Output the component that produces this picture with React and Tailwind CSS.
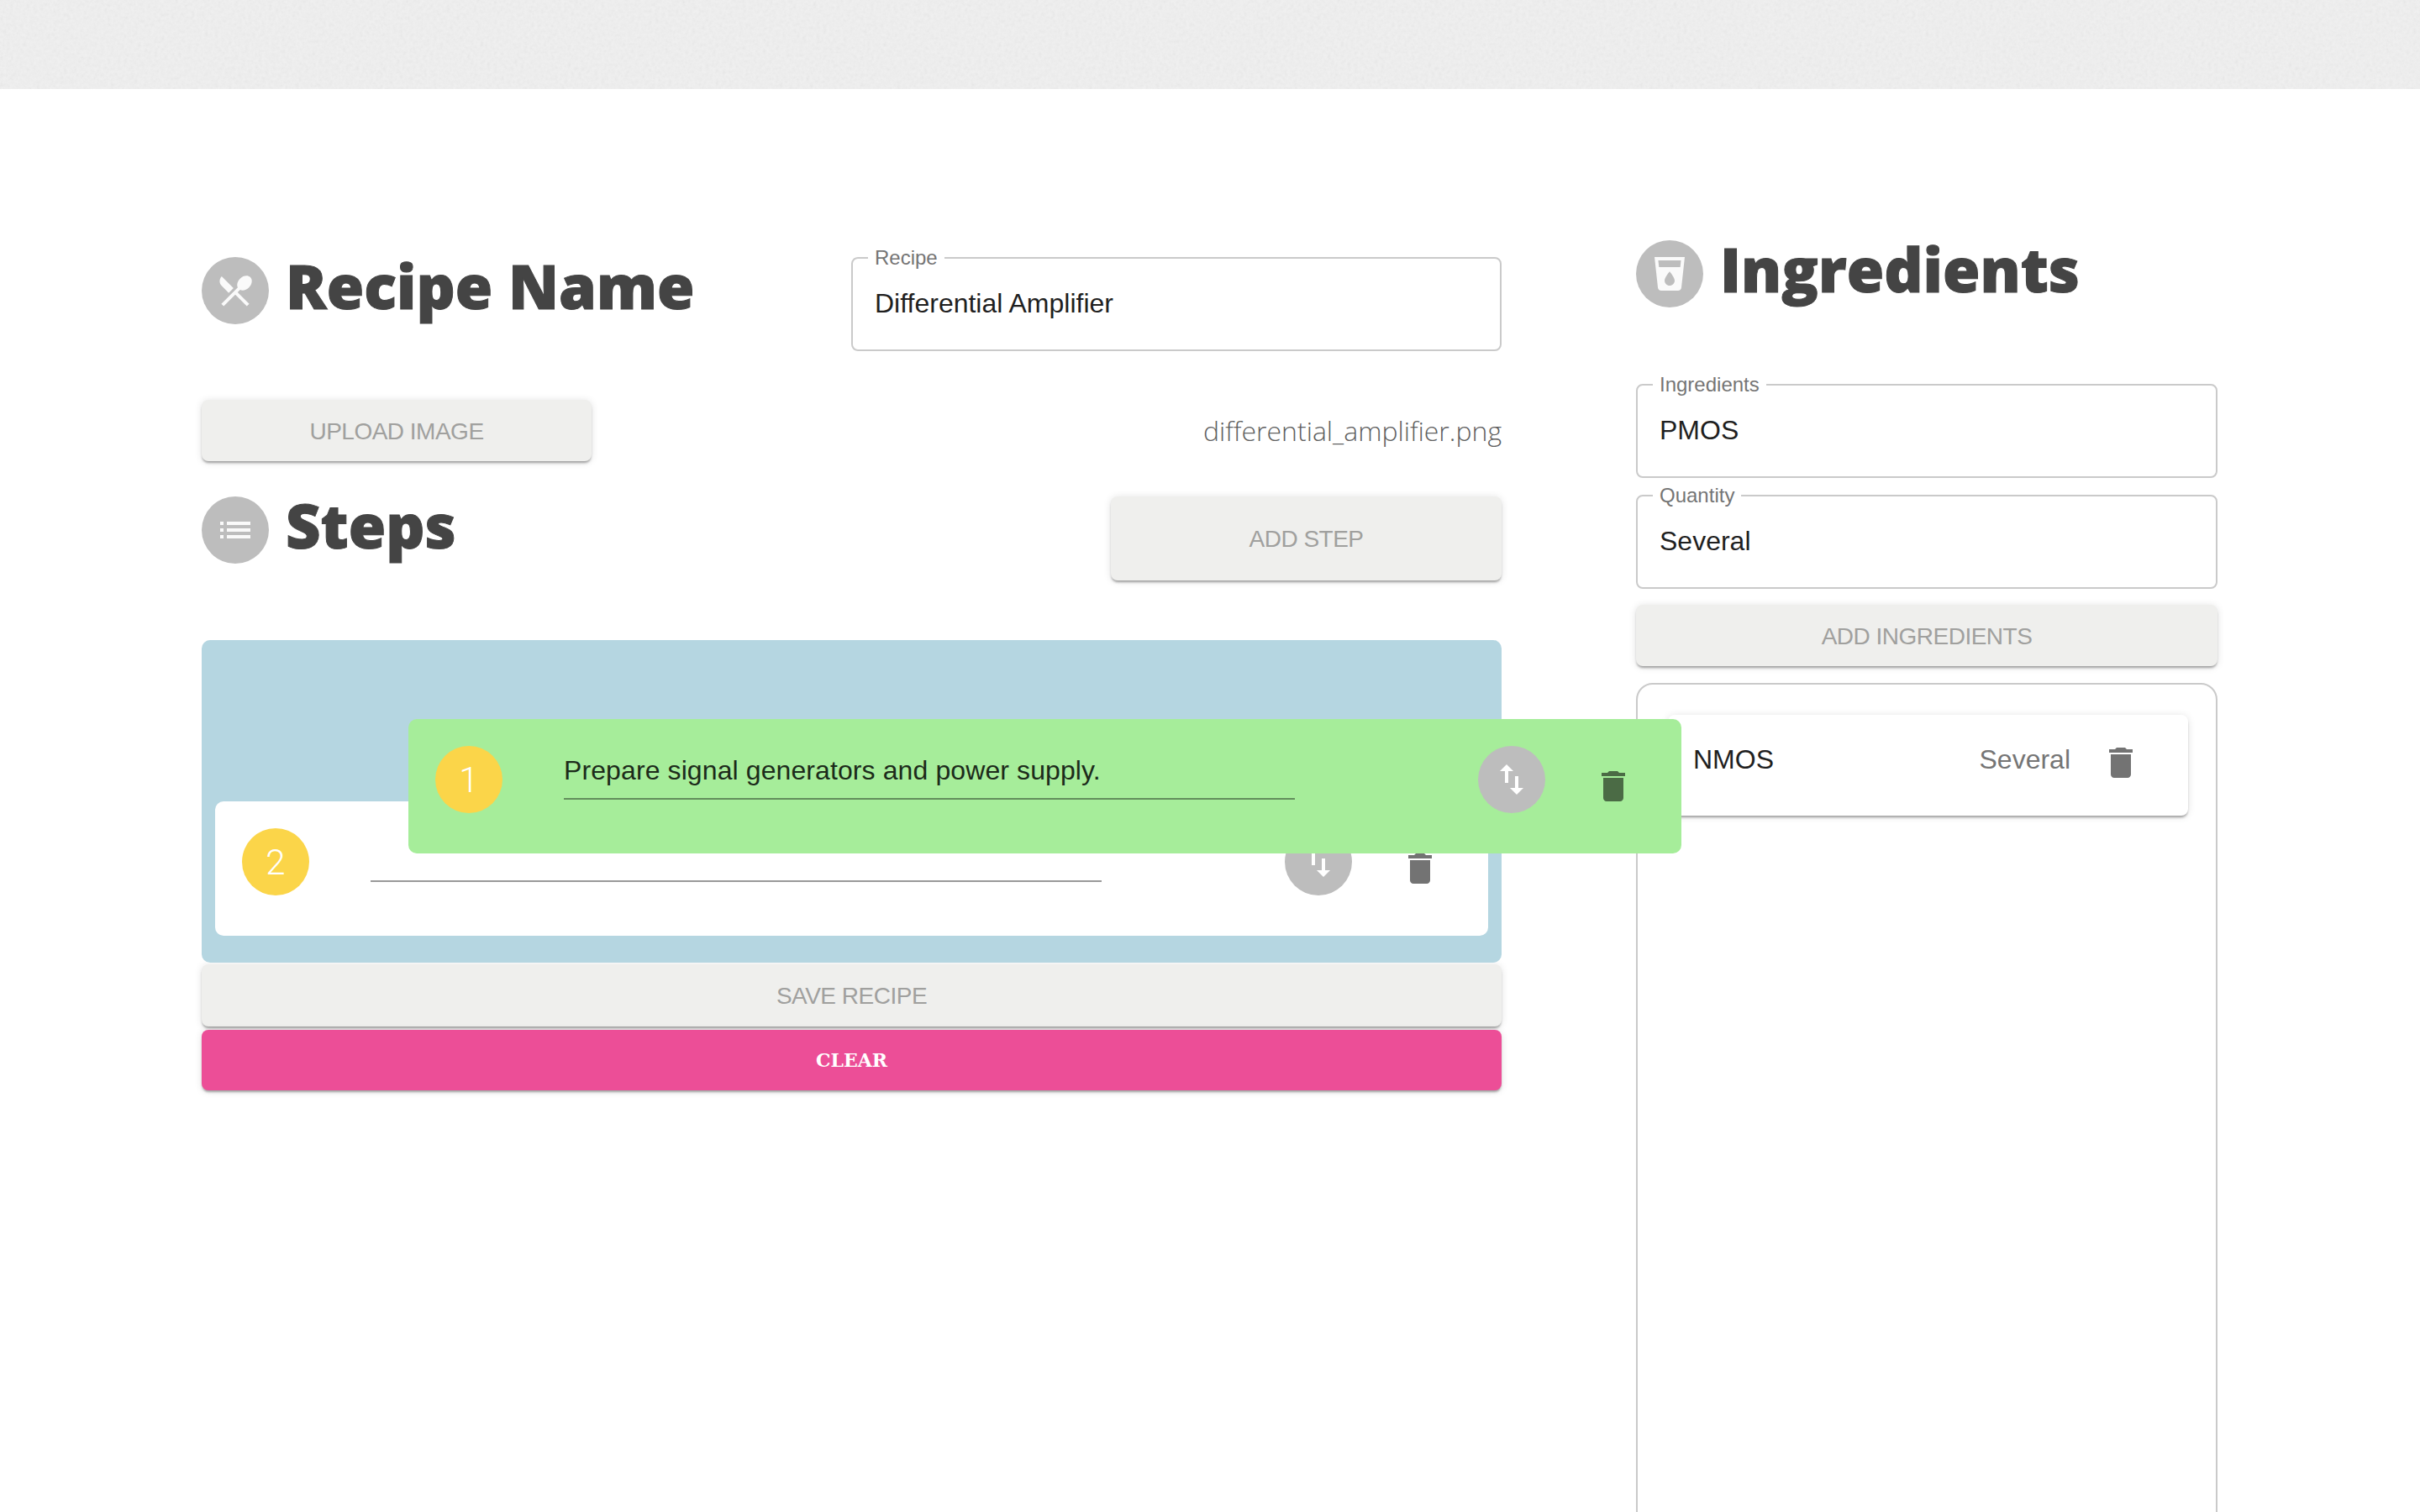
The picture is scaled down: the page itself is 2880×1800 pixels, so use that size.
import React from 'react';

const SWAP = 'M16 17.01V10h-2v7.01h-3L15 21l4-3.99h-3zM9 3L5 6.99h3V14h2V6.99h3L9 3z';
const TRASH = 'M6 19c0 1.1.9 2 2 2h8c1.1 0 2-.9 2-2V7H6v12zM19 4h-3.5l-1-1h-5l-1 1H5v2h14V4z';
const DINING = 'M8.1 13.34l2.83-2.83L3.91 3.5c-1.56 1.56-1.56 4.09 0 5.66l4.19 4.18zm6.78-1.81c1.53.71 3.68.21 5.27-1.38 1.91-1.91 2.28-4.65.81-6.12-1.46-1.46-4.2-1.1-6.12.81-1.59 1.59-2.09 3.74-1.38 5.27L3.7 19.87l1.41 1.41L12 14.41l6.88 6.88 1.41-1.41L13.41 13l1.47-1.47z';
const LIST = 'M3 13h2v-2H3v2zm0 4h2v-2H3v2zm0-8h2V7H3v2zm4 4h14v-2H7v2zm0 4h14v-2H7v2zM7 7v2h14V7H7z';
const DRINK = 'M3 2l2.01 18.23C5.13 21.23 5.97 22 7 22h10c1.03 0 1.87-.77 1.99-1.77L21 2H3zm9 17c-1.66 0-3-1.34-3-3 0-2 3-5.4 3-5.4s3 3.4 3 5.4c0 1.66-1.34 3-3 3zm6.33-11H5.67l-.44-4h13.53l-.43 4z';

function Icon({ d, className }) {
  return (
    <svg viewBox="0 0 24 24" className={`w-[48px] h-[48px] shrink-0 ${className}`} fill="currentColor">
      <path d={d} />
    </svg>
  );
}

function IconCircle({ d }) {
  return (
    <div className="w-[80px] h-[80px] rounded-full bg-[#bdbdbd] flex items-center justify-center shrink-0">
      <Icon d={d} className="text-[#fafafa]" />
    </div>
  );
}

function Heading({ icon, children }) {
  return (
    <div className="flex items-start gap-[20px] h-[80px]">
      <IconCircle d={icon} />
      <h1 className="-mt-[6px] font-['Open_Sans',sans-serif] font-extrabold text-[72px] leading-[80px] text-[#444444] [-webkit-text-stroke:1px_#444444]">{children}</h1>
    </div>
  );
}

// fieldset draws its top border through the middle of the legend, so the box starts above the line
function Field({ label, value, className = '' }) {
  return (
    <fieldset className={`h-[123px] border-2 border-[#cacaca] rounded-[8px] px-[26px] ${className}`}>
      <legend className="ml-[-8px] px-[8px] text-[24px] leading-[24px] text-[#757575]">{label}</legend>
      <div className="pt-[18px] text-[32px] leading-[48px] text-[#1f1f1f]">{value}</div>
    </fieldset>
  );
}

function Button({ children, className = '' }) {
  return (
    <div className={`bg-[#efefed] rounded-[8px] flex items-center justify-center pt-[2px] text-[28px] tracking-[-0.5px] text-[#a0a09e] shadow-[0_3px_3px_-1px_rgba(0,0,0,0.35),0_1px_10px_0_rgba(0,0,0,0.12)] ${className}`}>
      {children}
    </div>
  );
}

function StepRow({ num, text, className = '' }) {
  return (
    <div className={`w-[1515px] h-[160px] rounded-[10px] flex items-start pt-[32px] pl-[32px] ${className}`}>
      <div className="w-[80px] h-[80px] rounded-full bg-[#fbd549] flex items-center justify-center font-['Roboto',sans-serif] font-light text-[42px] text-white shrink-0">{num}</div>
      <div className="ml-[73px] w-[870px] h-[64px] border-b-2 border-black/40 pt-[5px] text-[32px] tracking-[0.1px] leading-[48px] text-[#1c2b1a]">{text}</div>
      <div className="ml-[218px] w-[80px] h-[80px] rounded-full bg-[#bdbdbd] flex items-center justify-center shrink-0">
        <Icon d={SWAP} className="text-white" />
      </div>
      <Icon d={TRASH} className="ml-[57px] mt-[24px] text-black/55" />
    </div>
  );
}

export default function App() {
  return (
    <div className="w-[2880px] h-[1800px] overflow-hidden bg-white font-['Liberation_Sans',sans-serif]">
      {/* Paper strip */}
      <div className="relative h-[106px] bg-[#f0f0f0] overflow-hidden">
        <svg className="absolute inset-0 w-full h-full opacity-[0.12]">
          <filter id="paper">
            <feTurbulence type="fractalNoise" baseFrequency="0.25" numOctaves="2" />
            <feColorMatrix type="saturate" values="0" />
          </filter>
          <rect width="100%" height="100%" filter="url(#paper)" />
        </svg>
      </div>

      <div className="flex pl-[240px] pt-[180px]">
        {/* Recipe column */}
        <div className="w-[1547px] pt-[20px]">
          <div className="flex items-start justify-between">
            <Heading icon={DINING}>Recipe Name</Heading>
            <Field label="Recipe" value="Differential Amplifier" className="w-[774px] -mt-[11px]" />
          </div>

          <div className="flex items-center justify-between mt-[58px]">
            <Button className="w-[464px] h-[73px]">UPLOAD IMAGE</Button>
            <span className="font-['Open_Sans',sans-serif] font-light text-[32px] text-[#5f5f5f]">differential_amplifier.png</span>
          </div>

          <div className="flex items-start justify-between mt-[42px]">
            <Heading icon={LIST}>Steps</Heading>
            <Button className="w-[465px] h-[100px]">ADD STEP</Button>
          </div>

          <div className="relative mt-[71px] h-[384px] bg-[#b5d6e1] rounded-[10px] pt-[192px] pl-[16px]">
            <StepRow num="2" className="bg-white" />
            {/* Step being dragged */}
            <StepRow
              num="1"
              text="Prepare signal generators and power supply."
              className="absolute left-[246px] top-[94px] bg-[#a6ed9a]"
            />
          </div>

          <Button className="w-full h-[74px] mt-[2px]">SAVE RECIPE</Button>
          <div className="w-full h-[72px] mt-[4px] bg-[#ec4e97] rounded-[8px] flex items-center justify-center font-['DejaVu_Serif',serif] font-bold text-[22px] text-white shadow-[0_3px_3px_-1px_rgba(0,0,0,0.35),0_1px_10px_0_rgba(0,0,0,0.12)]">
            CLEAR
          </div>
        </div>

        {/* Ingredients column */}
        <div className="ml-[160px] w-[692px]">
          <Heading icon={DRINK}>Ingredients</Heading>
          <Field label="Ingredients" value="PMOS" className="mt-[80px]" />
          <Field label="Quantity" value="Several" className="mt-[9px]" />
          <Button className="h-[73px] mt-[19px]">ADD INGREDIENTS</Button>
          <div className="h-[1100px] mt-[20px] border-2 border-[#cacaca] rounded-[20px] pt-[36px] pl-[36px] pr-[33px]">
            <div className="h-[120px] rounded-[8px] bg-white flex items-start pt-[33px] pl-[30px] pr-[56px] shadow-[0_3px_3px_-1px_rgba(0,0,0,0.35),0_1px_10px_0_rgba(0,0,0,0.12)]">
              <span className="-mt-[4px] text-[32px] leading-[48px] text-[#1f1f1f]">NMOS</span>
              <span className="-mt-[4px] ml-auto text-[32px] leading-[48px] text-[#757575]">Several</span>
              <Icon d={TRASH} className="ml-[36px] text-black/55" />
            </div>
          </div>
        </div>
      </div>
    </div>
  );
}
